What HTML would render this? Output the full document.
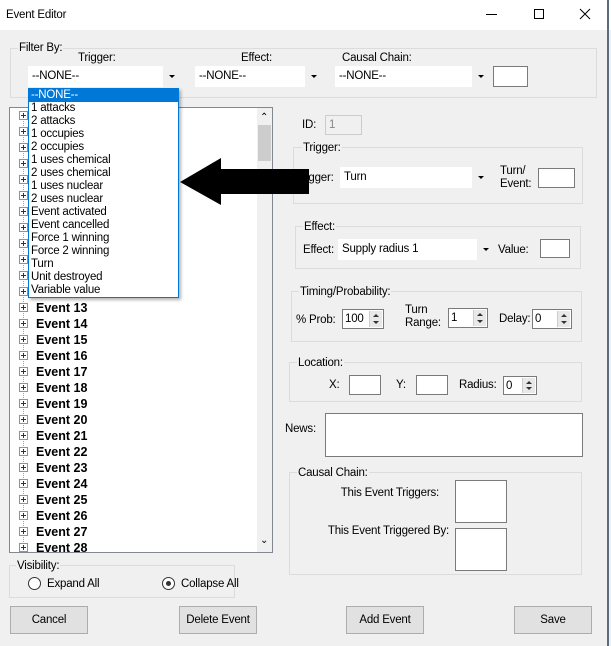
<!DOCTYPE html>
<html><head><meta charset="utf-8"><style>
*{box-sizing:border-box;margin:0;padding:0}
body{width:611px;height:646px;background:#f0f0f0;font-family:"Liberation Sans",sans-serif;font-size:11.5px;letter-spacing:-0.2px;color:#000;position:relative;overflow:hidden}
.a{position:absolute}
.t{position:absolute;white-space:nowrap;line-height:14px}
.g{position:absolute;border:1px solid #dcdcdc}
.gl{position:absolute;background:#f0f0f0;padding:0 1px;line-height:14px;white-space:nowrap}
.tb{position:absolute;background:#fff;border:1px solid #7a7a7a}
.dd{position:absolute;background:#fff}
.dd span{position:absolute;left:4px;top:3px;line-height:14px;white-space:nowrap}
.dd i{position:absolute;right:0;top:0;width:17px;height:100%;background:#f0f0f0;border-left:1px solid #fff}
.dd i:after{content:"";position:absolute;left:6px;top:9px;border:3px solid transparent;border-top:3px solid #000;border-bottom:0}
.sp{position:absolute;background:#fff;border:1px solid #7a7a7a}
.sp span{position:absolute;left:2px;top:2px;line-height:14px}
.sp i{position:absolute;right:1px;top:1px;width:13px;bottom:1px;background:#e8e8e8;border-left:1px solid #ccc}
.sp i:before{content:"";position:absolute;left:3px;top:3px;border:3px solid transparent;border-bottom:3px solid #333;border-top:0}
.sp i:after{content:"";position:absolute;left:3px;bottom:3px;border:3px solid transparent;border-top:3px solid #333;border-bottom:0}
.btn{position:absolute;background:#e1e1e1;border:1px solid #adadad;text-align:center;line-height:26px}
.row{position:absolute;left:9px;height:16px}
.pl{position:absolute;left:0;top:3px;width:9px;height:9px;border:1px solid #919191;background:#fff}
.pl:before{content:"";position:absolute;left:1px;top:3px;width:5px;height:1px;background:#333}
.pl:after{content:"";position:absolute;left:3px;top:1px;width:1px;height:5px;background:#333}
.row b{position:absolute;left:17px;top:0;font-size:12.5px;letter-spacing:0;line-height:16px;white-space:nowrap}
.li{position:absolute;left:2px;line-height:13px;white-space:nowrap}
</style></head><body>
<div class="a" style="left:0;top:0;width:611px;height:30px;background:#fff"></div>
<div class="t" style="left:6px;top:8px">Event Editor</div>
<div class="a" style="left:486px;top:14px;width:11px;height:1px;background:#000"></div>
<div class="a" style="left:534px;top:9px;width:10px;height:10px;border:1px solid #000"></div>
<svg class="a" style="left:579px;top:8px" width="12" height="12"><path d="M1 1L11 11M11 1L1 11" stroke="#000" stroke-width="1"/></svg>
<div class="a" style="left:607px;top:0;width:2px;height:646px;background:#5a6a80"></div>

<div class="g" style="left:10px;top:48px;width:587px;height:50px"></div>
<div class="gl" style="left:18px;top:41px">Filter By:</div>
<div class="t" style="left:78px;top:51px">Trigger:</div>
<div class="t" style="left:241px;top:51px">Effect:</div>
<div class="t" style="left:342px;top:51px">Causal Chain:</div>
<div class="dd" style="left:28px;top:66px;width:151px;height:21px"><span>--NONE--</span><i></i></div>
<div class="dd" style="left:195px;top:66px;width:126px;height:21px"><span>--NONE--</span><i></i></div>
<div class="dd" style="left:335px;top:66px;width:153px;height:21px"><span>--NONE--</span><i></i></div>
<div class="tb" style="left:493px;top:66px;width:35px;height:21px"></div>

<div class="a" style="left:9px;top:107px;width:264px;height:446px;background:#fff;border:1px solid #828790"></div>
<div class="a" style="left:257px;top:108px;width:15px;height:444px;background:#f0f0f0"></div>
<div class="a" style="left:258px;top:125px;width:13px;height:36px;background:#cdcdcd"></div>
<div class="t" style="left:260px;top:111px;font-size:10px">&#8963;</div>
<div class="t" style="left:260px;top:534px;font-size:10px">&#8964;</div>
<div class="a" style="left:10px;top:108px;width:246px;height:444px;overflow:hidden">
<div class="a" style="left:13px;top:4px;width:0;height:440px;border-left:1px dotted #a0a0a0"></div>
<div class="row" style="top:0px"><div class="pl"></div></div>
<div class="row" style="top:16px"><div class="pl"></div></div>
<div class="row" style="top:32px"><div class="pl"></div></div>
<div class="row" style="top:48px"><div class="pl"></div></div>
<div class="row" style="top:64px"><div class="pl"></div></div>
<div class="row" style="top:80px"><div class="pl"></div></div>
<div class="row" style="top:96px"><div class="pl"></div></div>
<div class="row" style="top:112px"><div class="pl"></div></div>
<div class="row" style="top:128px"><div class="pl"></div></div>
<div class="row" style="top:144px"><div class="pl"></div></div>
<div class="row" style="top:160px"><div class="pl"></div></div>
<div class="row" style="top:176px"><div class="pl"></div></div>
<div class="row" style="top:192px"><div class="pl"></div><b>Event 13</b></div>
<div class="row" style="top:208px"><div class="pl"></div><b>Event 14</b></div>
<div class="row" style="top:224px"><div class="pl"></div><b>Event 15</b></div>
<div class="row" style="top:240px"><div class="pl"></div><b>Event 16</b></div>
<div class="row" style="top:256px"><div class="pl"></div><b>Event 17</b></div>
<div class="row" style="top:272px"><div class="pl"></div><b>Event 18</b></div>
<div class="row" style="top:288px"><div class="pl"></div><b>Event 19</b></div>
<div class="row" style="top:304px"><div class="pl"></div><b>Event 20</b></div>
<div class="row" style="top:320px"><div class="pl"></div><b>Event 21</b></div>
<div class="row" style="top:336px"><div class="pl"></div><b>Event 22</b></div>
<div class="row" style="top:352px"><div class="pl"></div><b>Event 23</b></div>
<div class="row" style="top:368px"><div class="pl"></div><b>Event 24</b></div>
<div class="row" style="top:384px"><div class="pl"></div><b>Event 25</b></div>
<div class="row" style="top:400px"><div class="pl"></div><b>Event 26</b></div>
<div class="row" style="top:416px"><div class="pl"></div><b>Event 27</b></div>
<div class="row" style="top:432px"><div class="pl"></div><b>Event 28</b></div>
</div>

<div class="a" style="left:28px;top:88px;width:151px;height:210px;background:#fff;border:1px solid #0078d7;box-shadow:2px 2px 3px rgba(0,0,0,.3)">
<div class="a" style="left:0;top:0;width:149px;height:13px;background:#0078d7"></div>
<div class="li" style="top:0;color:#fff">--NONE--</div>
<div class="li" style="top:13px">1 attacks</div>
<div class="li" style="top:26px">2 attacks</div>
<div class="li" style="top:39px">1 occupies</div>
<div class="li" style="top:52px">2 occupies</div>
<div class="li" style="top:65px">1 uses chemical</div>
<div class="li" style="top:78px">2 uses chemical</div>
<div class="li" style="top:91px">1 uses nuclear</div>
<div class="li" style="top:104px">2 uses nuclear</div>
<div class="li" style="top:117px">Event activated</div>
<div class="li" style="top:130px">Event cancelled</div>
<div class="li" style="top:143px">Force 1 winning</div>
<div class="li" style="top:156px">Force 2 winning</div>
<div class="li" style="top:169px">Turn</div>
<div class="li" style="top:182px">Unit destroyed</div>
<div class="li" style="top:195px">Variable value</div>
</div>

<div class="g" style="left:9px;top:565px;width:226px;height:33px"></div>
<div class="gl" style="left:16px;top:559px">Visibility:</div>
<div class="a" style="left:28px;top:577px;width:13px;height:13px;border:1px solid #333;border-radius:50%;background:#fff"></div>
<div class="t" style="left:47px;top:577px">Expand All</div>
<div class="a" style="left:162px;top:577px;width:13px;height:13px;border:1px solid #333;border-radius:50%;background:#fff"></div>
<div class="a" style="left:166px;top:581px;width:5px;height:5px;border-radius:50%;background:#333"></div>
<div class="t" style="left:181px;top:577px">Collapse All</div>

<div class="t" style="left:302px;top:118px">ID:</div>
<div class="a" style="left:325px;top:115px;width:37px;height:20px;border:1px solid #ccc;background:#f0f0f0"></div>
<div class="t" style="left:329px;top:118px;color:#888">1</div>

<div class="g" style="left:293px;top:147px;width:290px;height:57px"></div>
<div class="gl" style="left:302px;top:141px">Trigger:</div>
<div class="t" style="left:296px;top:171px">Trigger:</div>
<div class="dd" style="left:340px;top:167px;width:148px;height:21px"><span>Turn</span><i></i></div>
<div class="t" style="left:500px;top:165px;line-height:13px">Turn/<br>Event:</div>
<div class="tb" style="left:538px;top:168px;width:37px;height:20px"></div>

<div class="g" style="left:295px;top:226px;width:286px;height:43px"></div>
<div class="gl" style="left:303px;top:220px">Effect:</div>
<div class="t" style="left:303px;top:243px">Effect:</div>
<div class="dd" style="left:338px;top:239px;width:155px;height:21px"><span>Supply radius 1</span><i></i></div>
<div class="t" style="left:498px;top:243px">Value:</div>
<div class="tb" style="left:540px;top:239px;width:30px;height:19px"></div>

<div class="g" style="left:291px;top:291px;width:291px;height:51px"></div>
<div class="gl" style="left:299px;top:285px">Timing/Probability:</div>
<div class="t" style="left:296px;top:313px">% Prob:</div>
<div class="sp" style="left:342px;top:309px;width:42px;height:20px"><span>100</span><i></i></div>
<div class="t" style="left:405px;top:304px;line-height:13px">Turn<br>Range:</div>
<div class="sp" style="left:448px;top:308px;width:40px;height:20px"><span>1</span><i></i></div>
<div class="t" style="left:499px;top:312px">Delay:</div>
<div class="sp" style="left:532px;top:309px;width:40px;height:20px"><span>0</span><i></i></div>

<div class="g" style="left:289px;top:362px;width:293px;height:40px"></div>
<div class="gl" style="left:297px;top:356px">Location:</div>
<div class="t" style="left:329px;top:378px">X:</div>
<div class="tb" style="left:349px;top:375px;width:32px;height:20px"></div>
<div class="t" style="left:396px;top:378px">Y:</div>
<div class="tb" style="left:416px;top:375px;width:32px;height:20px"></div>
<div class="t" style="left:459px;top:378px">Radius:</div>
<div class="sp" style="left:503px;top:376px;width:34px;height:19px"><span>0</span><i></i></div>

<div class="t" style="left:285px;top:422px">News:</div>
<div class="tb" style="left:325px;top:413px;width:258px;height:44px"></div>

<div class="g" style="left:289px;top:472px;width:293px;height:103px"></div>
<div class="gl" style="left:297px;top:466px">Causal Chain:</div>
<div class="t" style="right:172px;top:486px">This Event Triggers:</div>
<div class="tb" style="left:455px;top:480px;width:52px;height:43px"></div>
<div class="t" style="right:162px;top:524px">This Event Triggered By:</div>
<div class="tb" style="left:455px;top:528px;width:52px;height:43px"></div>

<div class="btn" style="left:10px;top:606px;width:78px;height:28px">Cancel</div>
<div class="btn" style="left:179px;top:606px;width:78px;height:28px">Delete Event</div>
<div class="btn" style="left:346px;top:606px;width:78px;height:28px">Add Event</div>
<div class="btn" style="left:514px;top:606px;width:78px;height:28px">Save</div>

<svg class="a" style="left:0;top:0" width="611" height="646"><polygon points="180,182 221,158 221,169 309,169 309,194 221,194 221,205" fill="#000"/></svg>
</body></html>
